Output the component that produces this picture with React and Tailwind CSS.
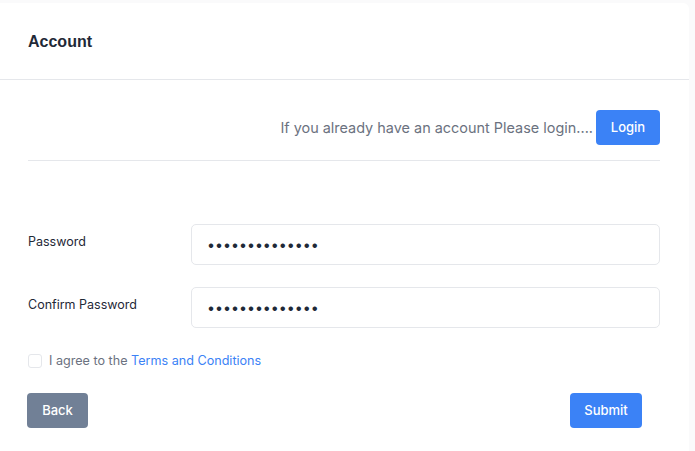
export default function App() {
  return (
    <div className="min-h-[451px] bg-[#fafafb] pt-[3px] pr-[6px] font-['Inter',sans-serif]">
      <div className="bg-white rounded-tr-md min-h-[448px]">
        <div className="h-[77px] flex items-center px-7 border-b border-[#e5e7eb]">
          <h2 className="text-[16px] font-semibold text-[#1f2937] font-['Liberation_Sans',sans-serif] pt-[1px]">Account</h2>
        </div>
        <div className="pl-7 pr-[29px]">
          <div className="flex items-center justify-end gap-[3px] pt-[30px] pb-[15px] border-b border-[#e5e7eb]">
            <span className="text-[14.45px] text-[#6b7280]">If you already have an account Please login....</span>
            <button className="h-[35px] w-[64px] rounded bg-[#3b82f6] text-white text-[13px] font-medium">Login</button>
          </div>
          <div className="pt-[63px] flex flex-col gap-[22px]">
            <div className="flex items-center">
              <label className="w-[163px] text-[12.5px] text-[#1f2937] -mt-[4px]">Password</label>
              <input
                type="password"
                readOnly
                value="aaaaaaaaaaaaaa"
                className="flex-1 h-[41px] rounded-[5px] border border-[#e5e7eb] px-[15px] text-[14.2px] text-[#1f2937] outline-none"
              />
            </div>
            <div className="flex items-center">
              <label className="w-[163px] text-[12.5px] text-[#1f2937] -mt-[4px]">Confirm Password</label>
              <input
                type="password"
                readOnly
                value="aaaaaaaaaaaaaa"
                className="flex-1 h-[41px] rounded-[5px] border border-[#e5e7eb] px-[15px] text-[14.2px] text-[#1f2937] outline-none"
              />
            </div>
          </div>
          <div className="flex items-center gap-[7px] mt-[24px]">
            <span className="w-[14px] h-[14px] rounded-[3px] border border-[#e5e7eb] bg-white" />
            <span className="text-[12.6px] text-[#6b7280]">
              I agree to the <a className="text-[#3b82f6]">Terms and Conditions</a>
            </span>
          </div>
          <div className="flex items-center justify-between mt-[22px] pr-[18px]">
            <button className="h-[35px] w-[61px] -ml-px rounded bg-[#718096] text-white text-[13px] font-medium">Back</button>
            <button className="h-[35px] w-[72px] rounded bg-[#3b82f6] text-white text-[13px] font-medium">Submit</button>
          </div>
        </div>
      </div>
    </div>
  );
}
